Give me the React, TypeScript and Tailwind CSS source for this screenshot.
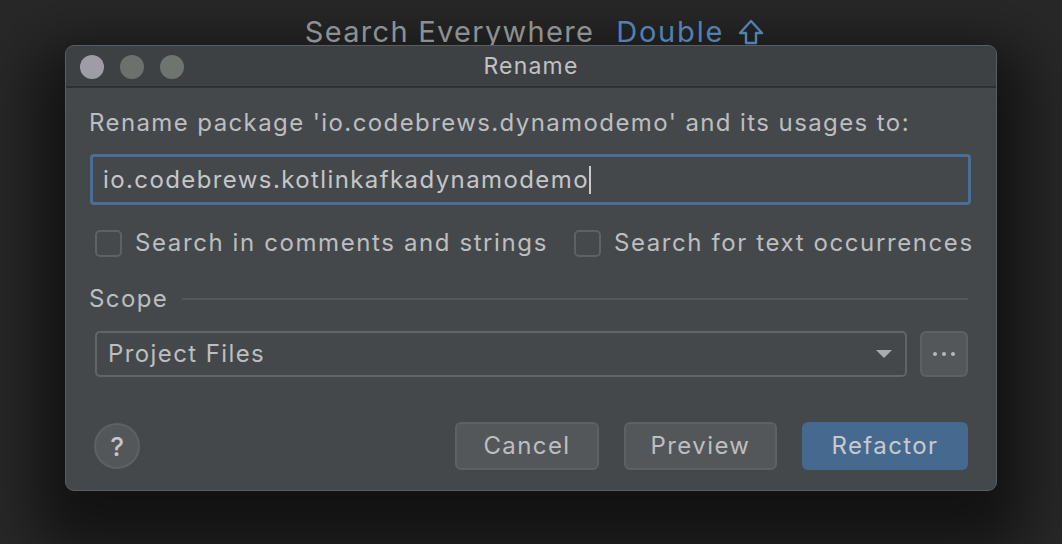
const font = { fontFamily: "Inter, 'Noto Sans', sans-serif" };

function Checkbox({ label }: { label: string }) {
    return (
        <label className="flex shrink-0 items-center gap-[13px] whitespace-nowrap">
            <span className="block h-[27px] w-[27px] shrink-0 rounded-[5px] border-2 border-[#5f6265] bg-[#46494c]" />
            <span className="text-[24px] leading-[28px] tracking-[1.6px] text-[#bcbec0]">
                {label}
            </span>
        </label>
    );
}

function DialogButton({
    label,
    width,
    primary,
}: {
    label: string;
    width: string;
    primary?: boolean;
}) {
    return (
        <button
            type="button"
            className={
                primary
                    ? `h-[48px] ${width} rounded-[6px] bg-[#466a8f] text-[24px] tracking-[1.4px] text-[#c7cacd]`
                    : `h-[48px] ${width} rounded-[6px] border-2 border-[#5e6164] bg-[#54575a] text-[24px] tracking-[1.4px] text-[#bcbec0]`
            }
        >
            {label}
        </button>
    );
}

export default function App() {
    return (
        <div
            className="h-[544px] w-full overflow-hidden bg-[#282828]"
            style={font}
        >
            <div className="flex h-[45px] items-start justify-center gap-[22px] overflow-hidden pl-[8px] pt-[14px] text-[29px] leading-[36px] tracking-[1.3px]">
                <span className="text-[#8d9093]">Search Everywhere</span>
                <span className="flex items-center gap-[13px] tracking-[1.8px] text-[#5280b0]">
                    Double
                    <svg width="28" height="28" viewBox="0 0 28 28" fill="none">
                        <path
                            d="M14 3 L25 15 H19 V25 H9 V15 H3 Z"
                            stroke="#5280b0"
                            strokeWidth="2.4"
                            strokeLinejoin="round"
                        />
                    </svg>
                </span>
            </div>

            <div className="ml-[65px] w-[932px] overflow-hidden rounded-[9px] border border-[#5b5e61] bg-[#45484b] shadow-[0_30px_60px_30px_rgba(0,0,0,0.55)]">
                <div className="relative flex h-[42px] items-center justify-center border-b-2 border-[#2d2f31] bg-[#3e4144]">
                    <div className="absolute left-[14px] top-[9px] flex gap-[16px]">
                        <span className="block h-[24px] w-[24px] rounded-full bg-[#9e9da5]" />
                        <span className="block h-[24px] w-[24px] rounded-full bg-[#6c716d]" />
                        <span className="block h-[24px] w-[24px] rounded-full bg-[#6e7470]" />
                    </div>
                    <span className="text-[23px] tracking-[1.2px] text-[#c0c2c4]">
                        Rename
                    </span>
                </div>

                <div className="px-[23px] pb-[20px] pt-[21px]">
                    <div className="text-[24px] leading-[28px] tracking-[1.4px] text-[#bcbec0]">
                        Rename package 'io.codebrews.dynamodemo' and its usages to:
                    </div>

                    <div className="ml-[1px] mr-[2px] mt-[17px] flex h-[51px] items-center rounded-[4px] border-[3px] border-[#4a6e95] bg-[#45484b] pl-[10px]">
                        <span className="text-[24px] tracking-[1.4px] text-[#c4c6c8]">
                            io.codebrews.kotlinkafkadynamodemo
                        </span>
                        <span className="block h-[28px] w-[2px] bg-[#c8cacc]" />
                    </div>

                    <div className="ml-[6px] mt-[24px] flex gap-[26px]">
                        <Checkbox label="Search in comments and strings" />
                        <Checkbox label="Search for text occurrences" />
                    </div>

                    <div className="mt-[28px] flex items-center gap-[14px]">
                        <span className="text-[24px] leading-[28px] tracking-[1.4px] text-[#bcbec0]">
                            Scope
                        </span>
                        <span className="mr-[5px] block h-[2px] flex-1 bg-[#55585b]" />
                    </div>

                    <div className="ml-[6px] mr-[5px] mt-[18px] flex gap-[13px]">
                        <div className="flex h-[46px] flex-1 items-center justify-between rounded-[5px] border-2 border-[#626568] pl-[11px] pr-[12px]">
                            <span className="text-[24px] tracking-[1.4px] text-[#bcbec0]">
                                Project Files
                            </span>
                            <svg width="18" height="10" viewBox="0 0 18 10">
                                <path d="M1 1 H17 L9 9 Z" fill="#a9abad" />
                            </svg>
                        </div>
                        <div className="flex h-[46px] w-[48px] items-center justify-center gap-[5px] rounded-[6px] border-2 border-[#5e6164] bg-[#54575a]">
                            <span className="block h-[4px] w-[4px] rounded-full bg-[#b5b7b9]" />
                            <span className="block h-[4px] w-[4px] rounded-full bg-[#b5b7b9]" />
                            <span className="block h-[4px] w-[4px] rounded-full bg-[#b5b7b9]" />
                        </div>
                    </div>

                    <div className="ml-[5px] mr-[5px] mt-[45px] flex items-center">
                        <div className="flex h-[46px] w-[46px] items-center justify-center rounded-full border-2 border-[#5e6164] bg-[#54575a] text-[26px] font-medium text-[#c4c6c8]">
                            ?
                        </div>
                        <div className="ml-auto flex gap-[25px]">
                            <DialogButton label="Cancel" width="w-[144px]" />
                            <DialogButton label="Preview" width="w-[153px]" />
                            <DialogButton label="Refactor" width="w-[166px]" primary />
                        </div>
                    </div>
                </div>
            </div>
        </div>
    );
}
